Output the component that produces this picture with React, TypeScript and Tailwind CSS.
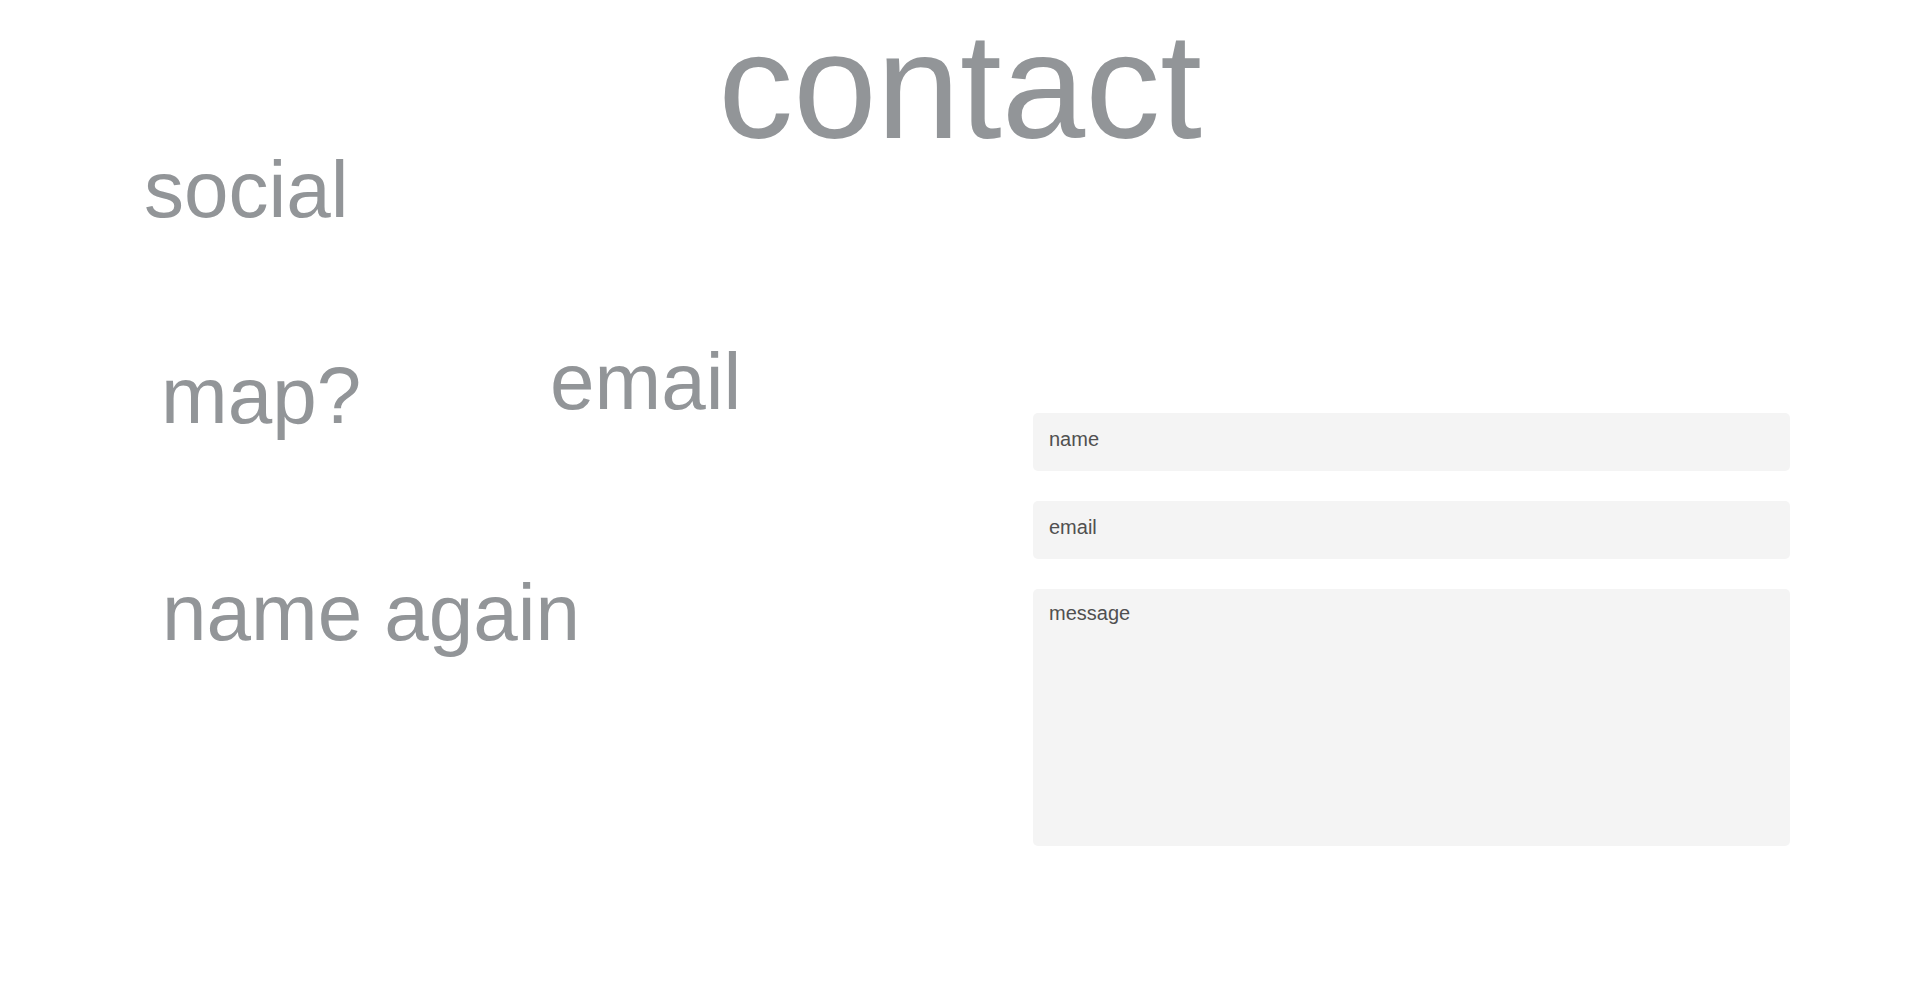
export default function App() {
  return (
    <div className="min-h-[1000px] w-full bg-white font-['Liberation_Sans',Arial,sans-serif] text-[#929598]">
      {/* heading */}
      <h1 className="h-[150px] pt-[11px] text-center text-[150px] font-normal leading-none">
        contact
      </h1>

      <div className="flex">
        {/* left side: placeholder labels */}
        <div className="w-[1033px] shrink-0">
          <p className="pl-[144px] text-[80px] leading-none">social</p>

          <div className="mt-[112px] grid grid-cols-[389px_auto] pl-[161px]">
            <p className="mt-[14px] text-[80px] leading-none">map?</p>
            <p className="text-[80px] leading-none">email</p>
          </div>

          <p className="mt-[137px] pl-[162px] text-[80px] leading-none">name again</p>
        </div>

        {/* contact form */}
        <form className="mt-[263px] flex w-[757px] flex-col gap-[30px]">
          <input
            type="text"
            placeholder="name"
            className="h-[58px] rounded-[5px] bg-[#f4f4f4] pb-[6px] pl-[16px] text-[20px] text-[#505050] outline-none placeholder:text-[#505050]"
          />
          <input
            type="email"
            placeholder="email"
            className="h-[58px] rounded-[5px] bg-[#f4f4f4] pb-[6px] pl-[16px] text-[20px] text-[#505050] outline-none placeholder:text-[#505050]"
          />
          <textarea
            placeholder="message"
            className="h-[257px] resize-none rounded-[5px] bg-[#f4f4f4] pl-[16px] pt-[9px] text-[20px] text-[#505050] outline-none placeholder:text-[#505050]"
          />
        </form>
      </div>
    </div>
  );
}
